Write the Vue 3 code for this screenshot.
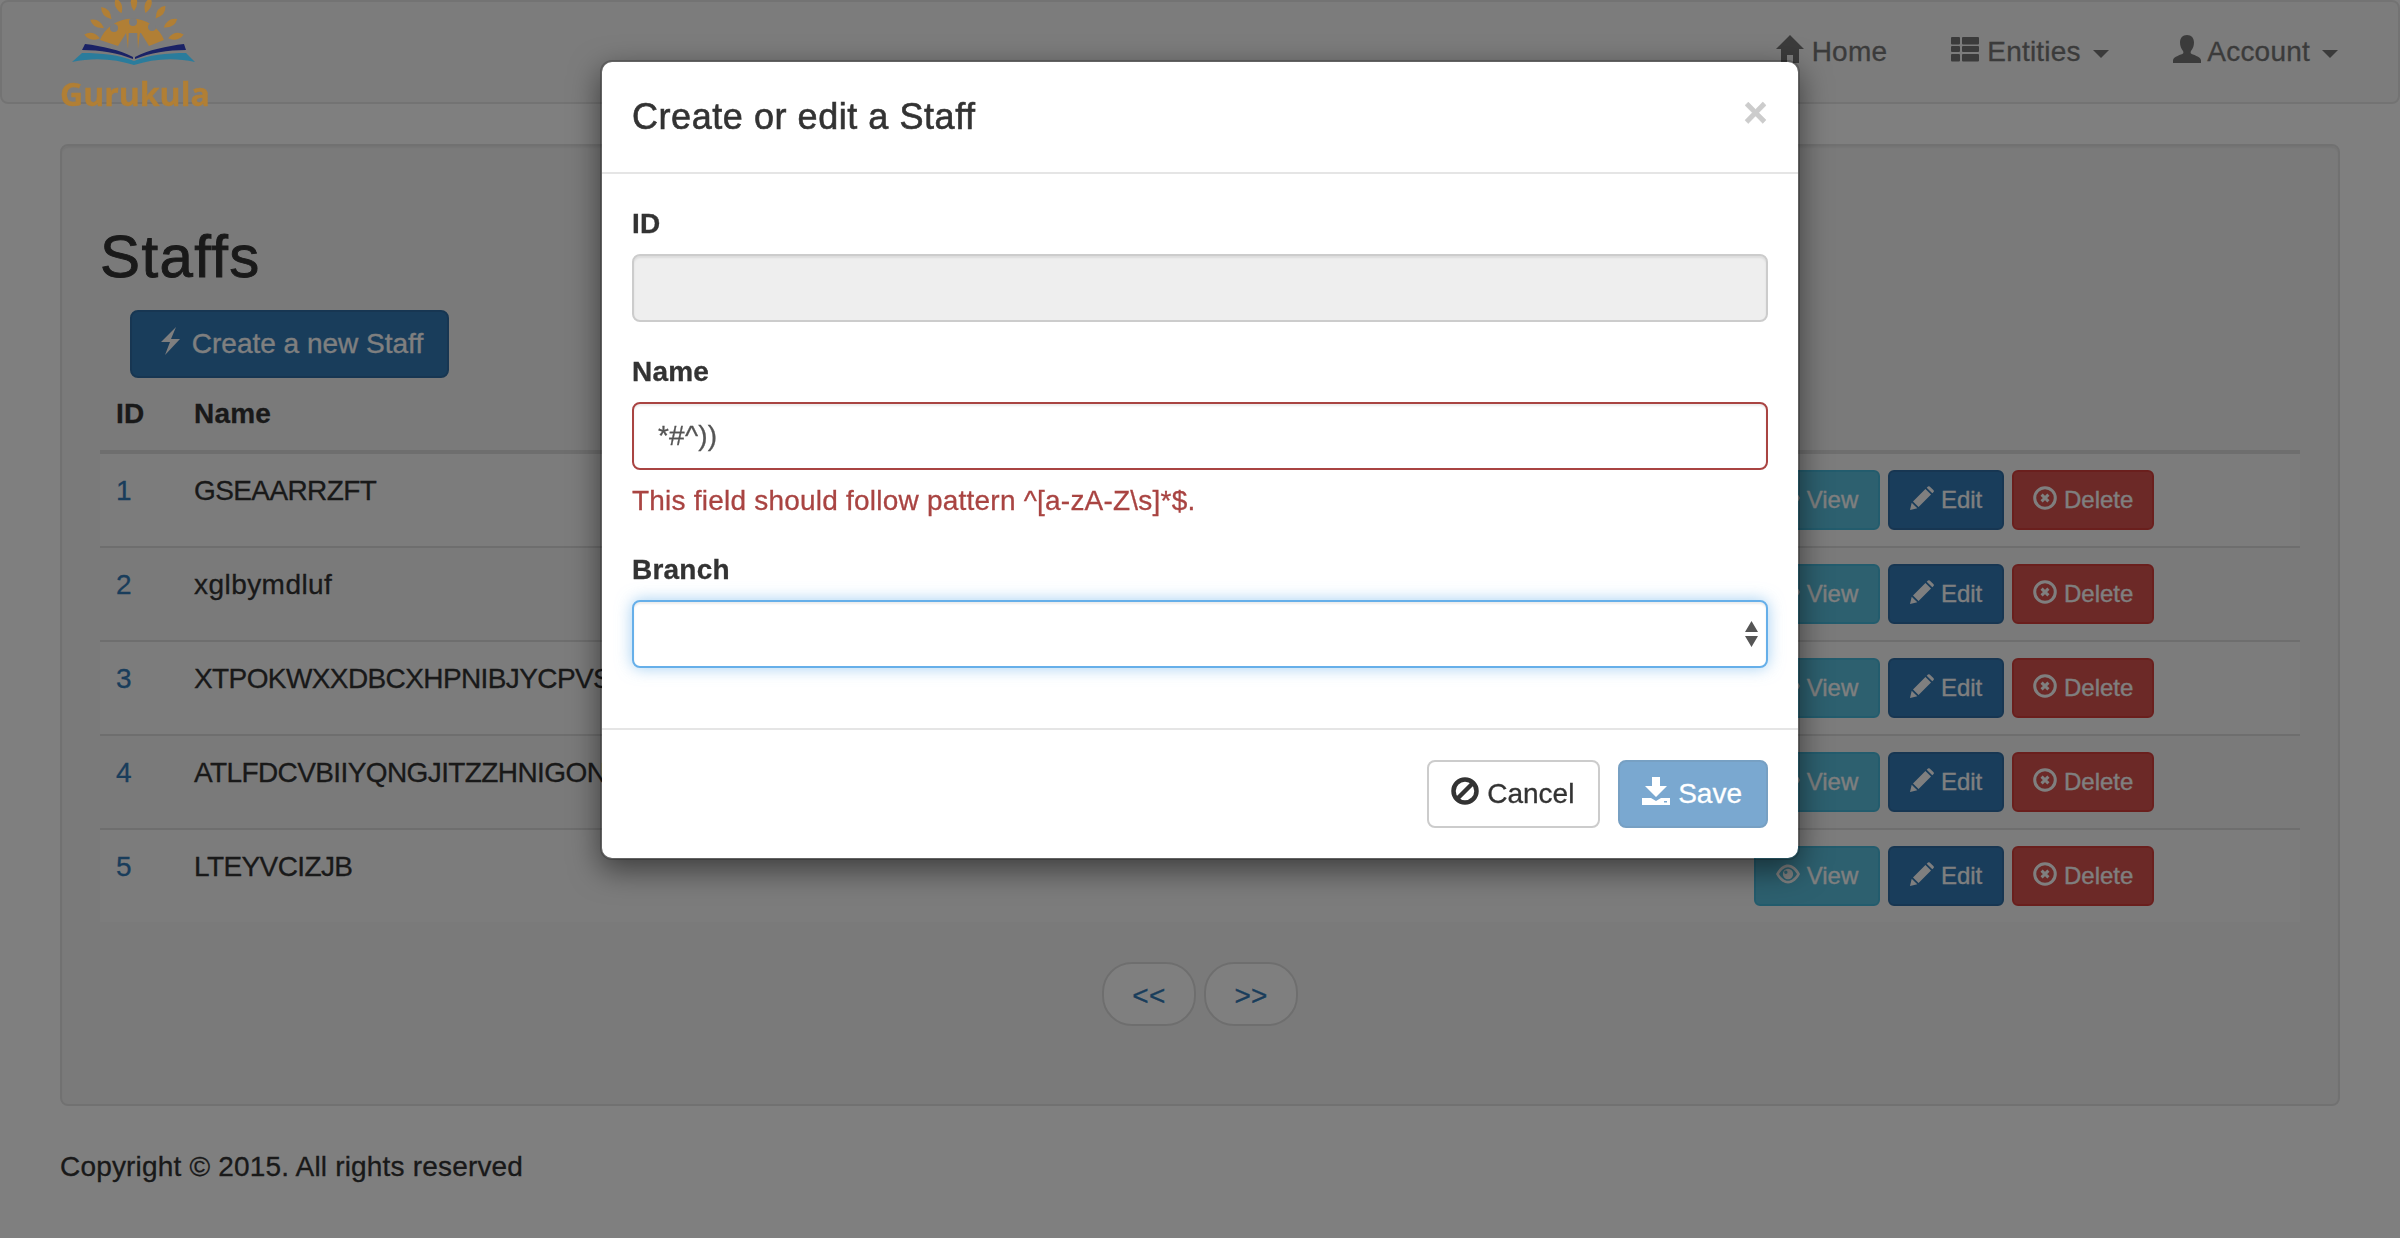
<template>
  <div class="page">
    <svg class="sprite" aria-hidden="true">
      <symbol id="i-home" viewBox="0 0 28 28"><path d="M14 0l14 14h-5v14h-6v-8h-6v8H5V14H0z" /></symbol>
      <symbol id="i-list" viewBox="0 0 28 28"><path d="M1 2h7a1 1 0 0 1 1 1v5.500a1 1 0 0 1-1 1H1a1 1 0 0 1-1-1V3a1 1 0 0 1 1-1zM12 2h15a1 1 0 0 1 1 1v5.500a1 1 0 0 1-1 1H12a1 1 0 0 1-1-1V3a1 1 0 0 1 1-1zM1 11h7a1 1 0 0 1 1 1v4a1 1 0 0 1-1 1H1a1 1 0 0 1-1-1v-4a1 1 0 0 1 1-1zM12 11h15a1 1 0 0 1 1 1v4a1 1 0 0 1-1 1H12a1 1 0 0 1-1-1v-4a1 1 0 0 1 1-1zM1 19h7a1 1 0 0 1 1 1v5.500a1 1 0 0 1-1 1H1a1 1 0 0 1-1-1V20a1 1 0 0 1 1-1zM12 19h15a1 1 0 0 1 1 1v5.500a1 1 0 0 1-1 1H12a1 1 0 0 1-1-1V20a1 1 0 0 1 1-1z" /></symbol>
      <symbol id="i-user" viewBox="0 0 28 28"><path d="M14 0c4.500 0 7 3 7 7.500 0 3-1 6-3 8.500-.5.800-.5 2 0 2.600 1 1 10 3 10 7V28H0v-2.400c0-4 9-6 10-7 .5-.6.5-1.800 0-2.600-2-2.500-3-5.500-3-8.500C7 3 9.500 0 14 0z" /></symbol>
      <symbol id="i-flash" viewBox="0 0 28 28"><path d="M20 0L5 15h9L9 28l15-16h-9z" /></symbol>
      <symbol id="i-eye" viewBox="0 0 28 28"><path fill-rule="evenodd" d="M14 3C8 3 3 8 0 14c3 6 8 11 14 11s11-5 14-11c-3-6-8-11-14-11zM14 6c-4 0-8 3.500-10.500 8 2.500 4.500 6.500 8 10.500 8s8-3.500 10.500-8C22 9.500 18 6 14 6zM14 8a6 6 0 1 0 0 12 6 6 0 0 0 0-12zM11.500 10a2 2 0 1 1 0 4 2 2 0 0 1 0-4z" /></symbol>
      <symbol id="i-pencil" viewBox="0 0 28 28"><path d="M0 28l2-8.500 6.500 6.500zM3.500 18L18 3.500 24.500 10 10 24.500zM19.500 2l1.500-1.500q1-.7 2 0l4.500 4.500q.7 1 0 2L26 8.500z" /></symbol>
      <symbol id="i-remove" viewBox="0 0 28 28"><circle cx="14" cy="14" r="12" fill="none" stroke="currentColor" stroke-width="3.500" /><path d="M10 10l8 8M18 10l-8 8" fill="none" stroke="currentColor" stroke-width="3.500" /></symbol>
      <symbol id="i-ban" viewBox="0 0 28 28"><circle cx="14" cy="14" r="11.500" fill="none" stroke="currentColor" stroke-width="4.500" /><path d="M6 22L22 6" fill="none" stroke="currentColor" stroke-width="4.500" /></symbol>
      <symbol id="i-download" viewBox="0 0 28 28"><path fill-rule="evenodd" d="M10 0h8v9h7L14 20 3 9h7zM0 21h9l5 3 5-3h9v7H0zM22 24v1.500h3V24z" /></symbol>
    </svg>

    <nav class="navbar">
      <a class="brand">
        <svg class="logo" viewBox="56 0 160 78">
          <path v-for="a in rays" :key="a" d="M132-5Q138.500 2 132 11 125.500 2 132-5z" fill="#b17f35" :transform="`rotate(${a} 132 46)`" />
          <path d="M98 40A34 32 0 0 1 162 40L147 46 139 33H124L116 46z" fill="#b17f35" />
          <path d="M123.500 28H127L126 49zM138.500 28H135L136 49z" fill="#b17f35" />
          <circle cx="112" cy="28" r="4" fill="#7c7c7c" />
          <circle cx="131" cy="22" r="4" fill="#7c7c7c" />
          <circle cx="150" cy="27" r="4" fill="#7c7c7c" />
          <path d="M83 44C100 46 118 50 131 57L131 59C116 53 98 50 80 50zM182 44C165 46 146 50 133 57L133 59C148 53 166 50 184 50z" fill="#1a2266" />
          <path d="M80 53C100 53 118 55 132 61 146 55 165 53 184 53L193 62C172 57 150 59 132 65 114 59 92 57 70 62z" fill="#2a7c9c" />
        </svg>
        <span class="brand-name">Gurukula</span>
      </a>
      <ul class="nav">
        <li><svg class="ico"><use href="#i-home" /></svg> Home</li>
        <li><svg class="ico"><use href="#i-list" /></svg> Entities <b class="caret"></b></li>
        <li><svg class="ico"><use href="#i-user" /></svg> Account <b class="caret"></b></li>
      </ul>
    </nav>

    <main class="well">
      <h2>Staffs</h2>
      <button class="btn btn-primary create"><svg class="ico"><use href="#i-flash" /></svg> Create a new Staff</button>
      <table class="table">
        <colgroup>
          <col class="c-id" />
          <col />
          <col class="c-act" />
        </colgroup>
        <thead>
          <tr><th>ID</th><th>Name</th><th></th></tr>
        </thead>
        <tbody>
          <tr v-for="s in staffs" :key="s.id">
            <td><a class="link">{{ s.id }}</a></td>
            <td class="name" :class="{ caps: s.name === s.name.toUpperCase() }">{{ s.name }}</td>
            <td class="act">
              <div class="actions">
                <button class="btn btn-sm btn-info"><svg class="ico-sm"><use href="#i-eye" /></svg> View</button>
                <button class="btn btn-sm btn-primary"><svg class="ico-sm"><use href="#i-pencil" /></svg> Edit</button>
                <button class="btn btn-sm btn-danger"><svg class="ico-sm"><use href="#i-remove" /></svg> Delete</button>
              </div>
            </td>
          </tr>
        </tbody>
      </table>
      <ul class="pager">
        <li><a>&lt;&lt;</a></li>
        <li><a>&gt;&gt;</a></li>
      </ul>
    </main>

    <footer class="footer">Copyright © 2015. All rights reserved</footer>

    <div class="backdrop"></div>

    <div class="modal">
      <div class="dialog">
        <header class="modal-header">
          <span class="close">×</span>
          <h4>Create or edit a Staff</h4>
        </header>
        <section class="modal-body">
          <div class="group">
            <label>ID</label>
            <input class="control" disabled />
          </div>
          <div class="group">
            <label>Name</label>
            <input class="control invalid" v-model="name" />
            <p class="help">This field should follow pattern ^[a-zA-Z\s]*$.</p>
          </div>
          <div class="group">
            <label>Branch</label>
            <div class="select-wrap">
              <select class="control focused"></select>
              <svg class="updown" viewBox="0 0 13 26"><path d="M6.500 0L13 11H0zM0 15h13L6.500 26z" /></svg>
            </div>
          </div>
        </section>
        <footer class="modal-footer">
          <button class="btn btn-default"><svg class="ico"><use href="#i-ban" /></svg> Cancel</button>
          <button class="btn btn-primary save"><svg class="ico"><use href="#i-download" /></svg> Save</button>
        </footer>
      </div>
    </div>
  </div>
</template>

<script setup>
import { ref } from 'vue'

const name = ref('*#^))')

const rays = [-77, -59, -40, -21, 0, 19, 38, 58, 77]

const staffs = [
  { id: 1, name: 'GSEAARRZFT' },
  { id: 2, name: 'xglbymdluf' },
  { id: 3, name: 'XTPOKWXXDBCXHPNIBJYCPVS' },
  { id: 4, name: 'ATLFDCVBIIYQNGJITZZHNIGON' },
  { id: 5, name: 'LTEYVCIZJB' }
]
</script>

<style scoped>
.page { font-family: "Liberation Sans", Arial, sans-serif; font-size: 28px; line-height: 40px; letter-spacing: .22px; -webkit-text-stroke: .3px; color: #333; background: #fff; min-height: 1238px; }
.sprite { position: absolute; width: 0; height: 0; }

.navbar { display: flex; justify-content: space-between; height: 104px; box-sizing: border-box; background: #f8f8f8; border: 2px solid #e7e7e7; border-radius: 8px; margin-bottom: 40px; padding-right: 30px; }
.brand { position: relative; z-index: 1045; display: block; width: 160px; margin-left: 56px; height: 106px; margin-top: -2px; }
.logo { display: block; width: 160px; height: 78px; overflow: hidden; }
.brand-name { display: block; margin: 1px 0 0 2px; font-family: "Open Sans", sans-serif; font-weight: 700; font-size: 32px; line-height: 30px; letter-spacing: 0; -webkit-text-stroke: .4px; color: #b17f35; white-space: nowrap; }
.nav { display: flex; gap: 4px; list-style: none; margin: 0; padding: 0; color: #777; }
.nav li { padding: 30px; white-space: nowrap; }
.ico { width: 28px; height: 28px; vertical-align: -2px; fill: currentColor; }
.ico-sm { width: 24px; height: 24px; vertical-align: -2px; fill: currentColor; }
.caret { display: inline-block; width: 0; height: 0; margin-left: 4px; vertical-align: middle; border-top: 8px solid; border-left: 8px solid transparent; border-right: 8px solid transparent; }

.well { margin: 0 60px; padding: 38px; background: #f5f5f5; border: 2px solid #e3e3e3; border-radius: 8px; box-shadow: inset 0 2px 2px rgba(0, 0, 0, .05); }
h2 { margin: 40px 0 20px; font-size: 60px; line-height: 66px; font-weight: 500; letter-spacing: 1.400px; font-variant-ligatures: none; -webkit-text-stroke: .9px; }
.create { margin-left: 30px; display: block; }

.btn { font: inherit; letter-spacing: 0; height: 68px; padding: 12px 24px; box-sizing: border-box; border: 2px solid transparent; border-radius: 8px; white-space: nowrap; }
.btn-sm { height: 60px; padding: 10px 20px; font-size: 24px; line-height: 36px; border-radius: 6px; }
.btn-primary { color: #fff; background: #337ab7; border-color: #2e6da4; }
.btn-info { color: #fff; background: #5bc0de; border-color: #46b8da; }
.btn-danger { color: #fff; background: #d9534f; border-color: #d43f3a; padding-left: 19px; padding-right: 19px; }
.btn-default { color: #333; background: #fff; border-color: #ccc; }

.table { width: 100%; border-collapse: separate; border-spacing: 0; table-layout: fixed; }
.c-id { width: 78px; }
.c-act { width: 562px; }
th { padding: 16px; text-align: left; font-weight: 700; border-bottom: 4px solid #ddd; }
td { padding: 17px 16px 15px; vertical-align: top; border-bottom: 2px solid #ddd; }
td.act { padding: 16px; }
tbody tr:nth-child(odd) td { background: #f9f9f9; }
tbody tr:last-child td { border-bottom: 0; }
.name { white-space: nowrap; letter-spacing: .45px; }
.caps { letter-spacing: -.6px; }
.link { color: #337ab7; }
.actions { display: flex; gap: 8px; }

.pager { display: flex; justify-content: center; gap: 8px; list-style: none; margin: 40px 0; padding: 0; }
.pager a { display: block; padding: 12px 28.500px 8px; color: #337ab7; background: #fff; border: 2px solid #ddd; border-radius: 30px; }

.footer { padding: 41px 60px 0; letter-spacing: .18px; }

.backdrop { position: fixed; inset: 0; z-index: 1040; background: rgba(0, 0, 0, .5); }
.modal { position: fixed; inset: 0; z-index: 1050; }
.dialog { width: 1200px; margin: 60px auto 0; box-sizing: border-box; background: #fff; border: 2px solid rgba(0, 0, 0, .2); border-radius: 12px; background-clip: padding-box; box-shadow: 0 10px 30px rgba(0, 0, 0, .5); }
.modal-header { padding: 30px; height: 112px; box-sizing: border-box; border-bottom: 2px solid #e5e5e5; }
h4 { margin: 0; font-size: 36px; line-height: 50px; font-weight: 500; letter-spacing: .55px; -webkit-text-stroke: .6px; }
.close { float: right; font-size: 42px; line-height: 42px; font-weight: 700; color: #ccc; }
.modal-body { padding: 30px; }
.group { margin-bottom: 30px; }
label { display: block; margin-bottom: 10px; font-weight: 700; }
.control { display: block; width: 100%; height: 68px; box-sizing: border-box; padding: 12px 24px; font: inherit; letter-spacing: inherit; color: #555; background: #fff; border: 2px solid #ccc; border-radius: 8px; outline: 0; box-shadow: inset 0 2px 2px rgba(0, 0, 0, .075); appearance: none; }
.control:disabled { background: #eee; }
.invalid { border-color: #a94442; }
.focused { border-color: #66afe9; box-shadow: inset 0 2px 2px rgba(0, 0, 0, .075), 0 0 16px rgba(102, 175, 233, .6); }
.help { margin: 11px 0 -1px; color: #a94442; }
.select-wrap { position: relative; }
.updown { position: absolute; top: 21px; right: 10px; width: 13px; height: 26px; fill: #555; }
.modal-footer { display: flex; justify-content: flex-end; gap: 18px; padding: 30px; border-top: 2px solid #e5e5e5; }
.modal-footer .btn { padding-left: 22px; }
.save { opacity: .65; }
</style>
